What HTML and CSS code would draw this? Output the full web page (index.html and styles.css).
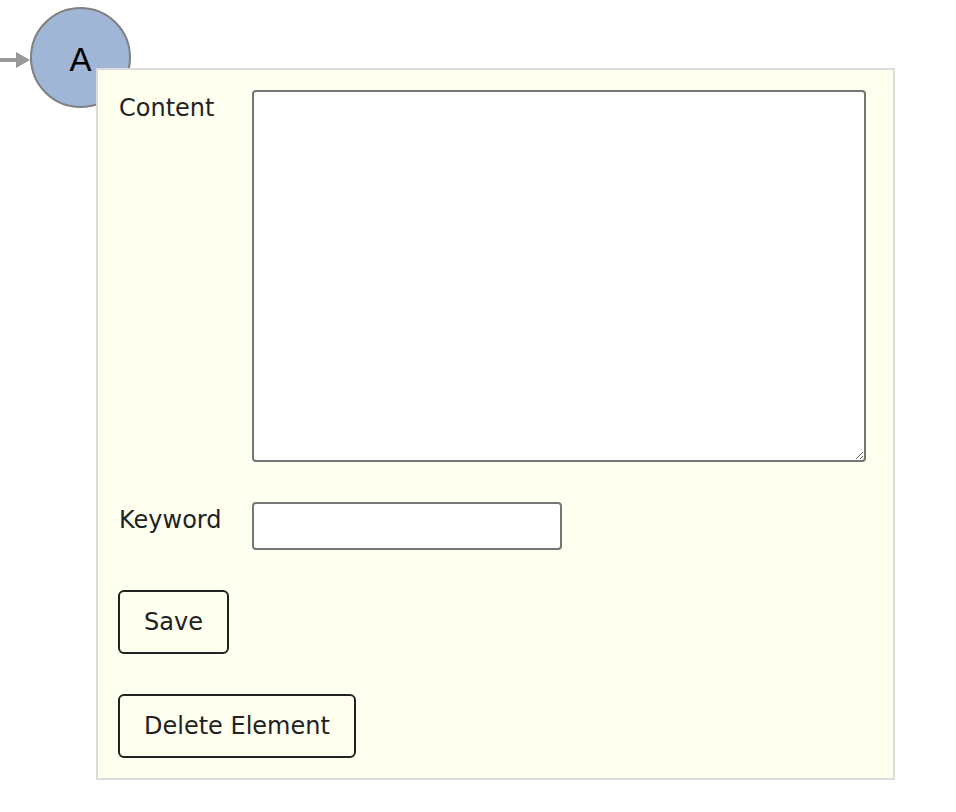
FILE: index.html
```html
<!DOCTYPE html>
<html>
<head>
<meta charset="utf-8">
<link rel="stylesheet" href="styles.css">
</head>
<body>
<div class="canvas">
  <svg class="arrow" width="32" height="20" viewBox="0 0 32 20">
    <line x1="0" y1="10" x2="20" y2="10" stroke="#999" stroke-width="4"/>
    <polygon points="16,2 30,10 16,18" fill="#999"/>
  </svg>
  <div class="node"><span class="node-text">A</span></div>
  <div class="panel">
    <form class="form">
      <label class="label">Content</label>
      <textarea class="area"></textarea>
      <label class="label">Keyword</label>
      <input class="input" type="text">
      <div class="actions">
        <button type="button" class="btn">Save</button>
        <button type="button" class="btn">Delete Element</button>
      </div>
    </form>
  </div>
</div>
</body>
</html>
```

FILE: styles.css
```css
html, body {
  margin: 0;
  padding: 0;
  background: #ffffff;
}
body {
  font-family: "DejaVu Sans", Verdana, sans-serif;
  color: #222;
}
.canvas {
  position: relative;
  width: 956px;
  height: 812px;
}
.arrow {
  position: absolute;
  left: 0;
  top: 50px;
}
.node {
  position: absolute;
  left: 30px;
  top: 7px;
  width: 97px;
  height: 97px;
  border: 2px solid #808080;
  border-radius: 50%;
  background: #a0b6d6;
  display: flex;
  align-items: center;
  justify-content: center;
  box-sizing: content-box;
}
.node-text {
  font-family: "Liberation Sans", Arial, sans-serif;
  font-size: 33px;
  line-height: 1;
  color: #000;
  padding-top: 3px;
}
.panel {
  position: absolute;
  left: 96px;
  top: 68px;
  width: 799px;
  height: 712px;
  border: 2px solid #dcdcdc;
  background: #fffff0;
  padding: 20px 20px;
  box-sizing: border-box;
}
.form {
  display: grid;
  grid-template-columns: 134px 614px;
  row-gap: 40px;
  align-items: start;
}
.label {
  font-size: 24px;
  padding-top: 4px;
  padding-left: 1px;
  color: #222;
}
.area {
  width: 614px;
  height: 372px;
  box-sizing: border-box;
  border: 2px solid #767676;
  border-radius: 4px;
  background: #fff;
  margin: 0;
  resize: both;
  display: block;
}
.input {
  width: 310px;
  height: 48px;
  box-sizing: border-box;
  border: 2px solid #767676;
  border-radius: 4px;
  background: #fff;
  margin: 0;
  display: block;
}
.actions {
  grid-column: 1 / 3;
  display: flex;
  flex-direction: column;
  align-items: flex-start;
  gap: 40px;
}
.btn {
  font-family: "DejaVu Sans", Verdana, sans-serif;
  font-size: 24px;
  color: #222;
  background: transparent;
  border: 2px solid #222;
  border-radius: 6px;
  height: 64px;
  padding: 0 24px;
  margin: 0;
}
```
